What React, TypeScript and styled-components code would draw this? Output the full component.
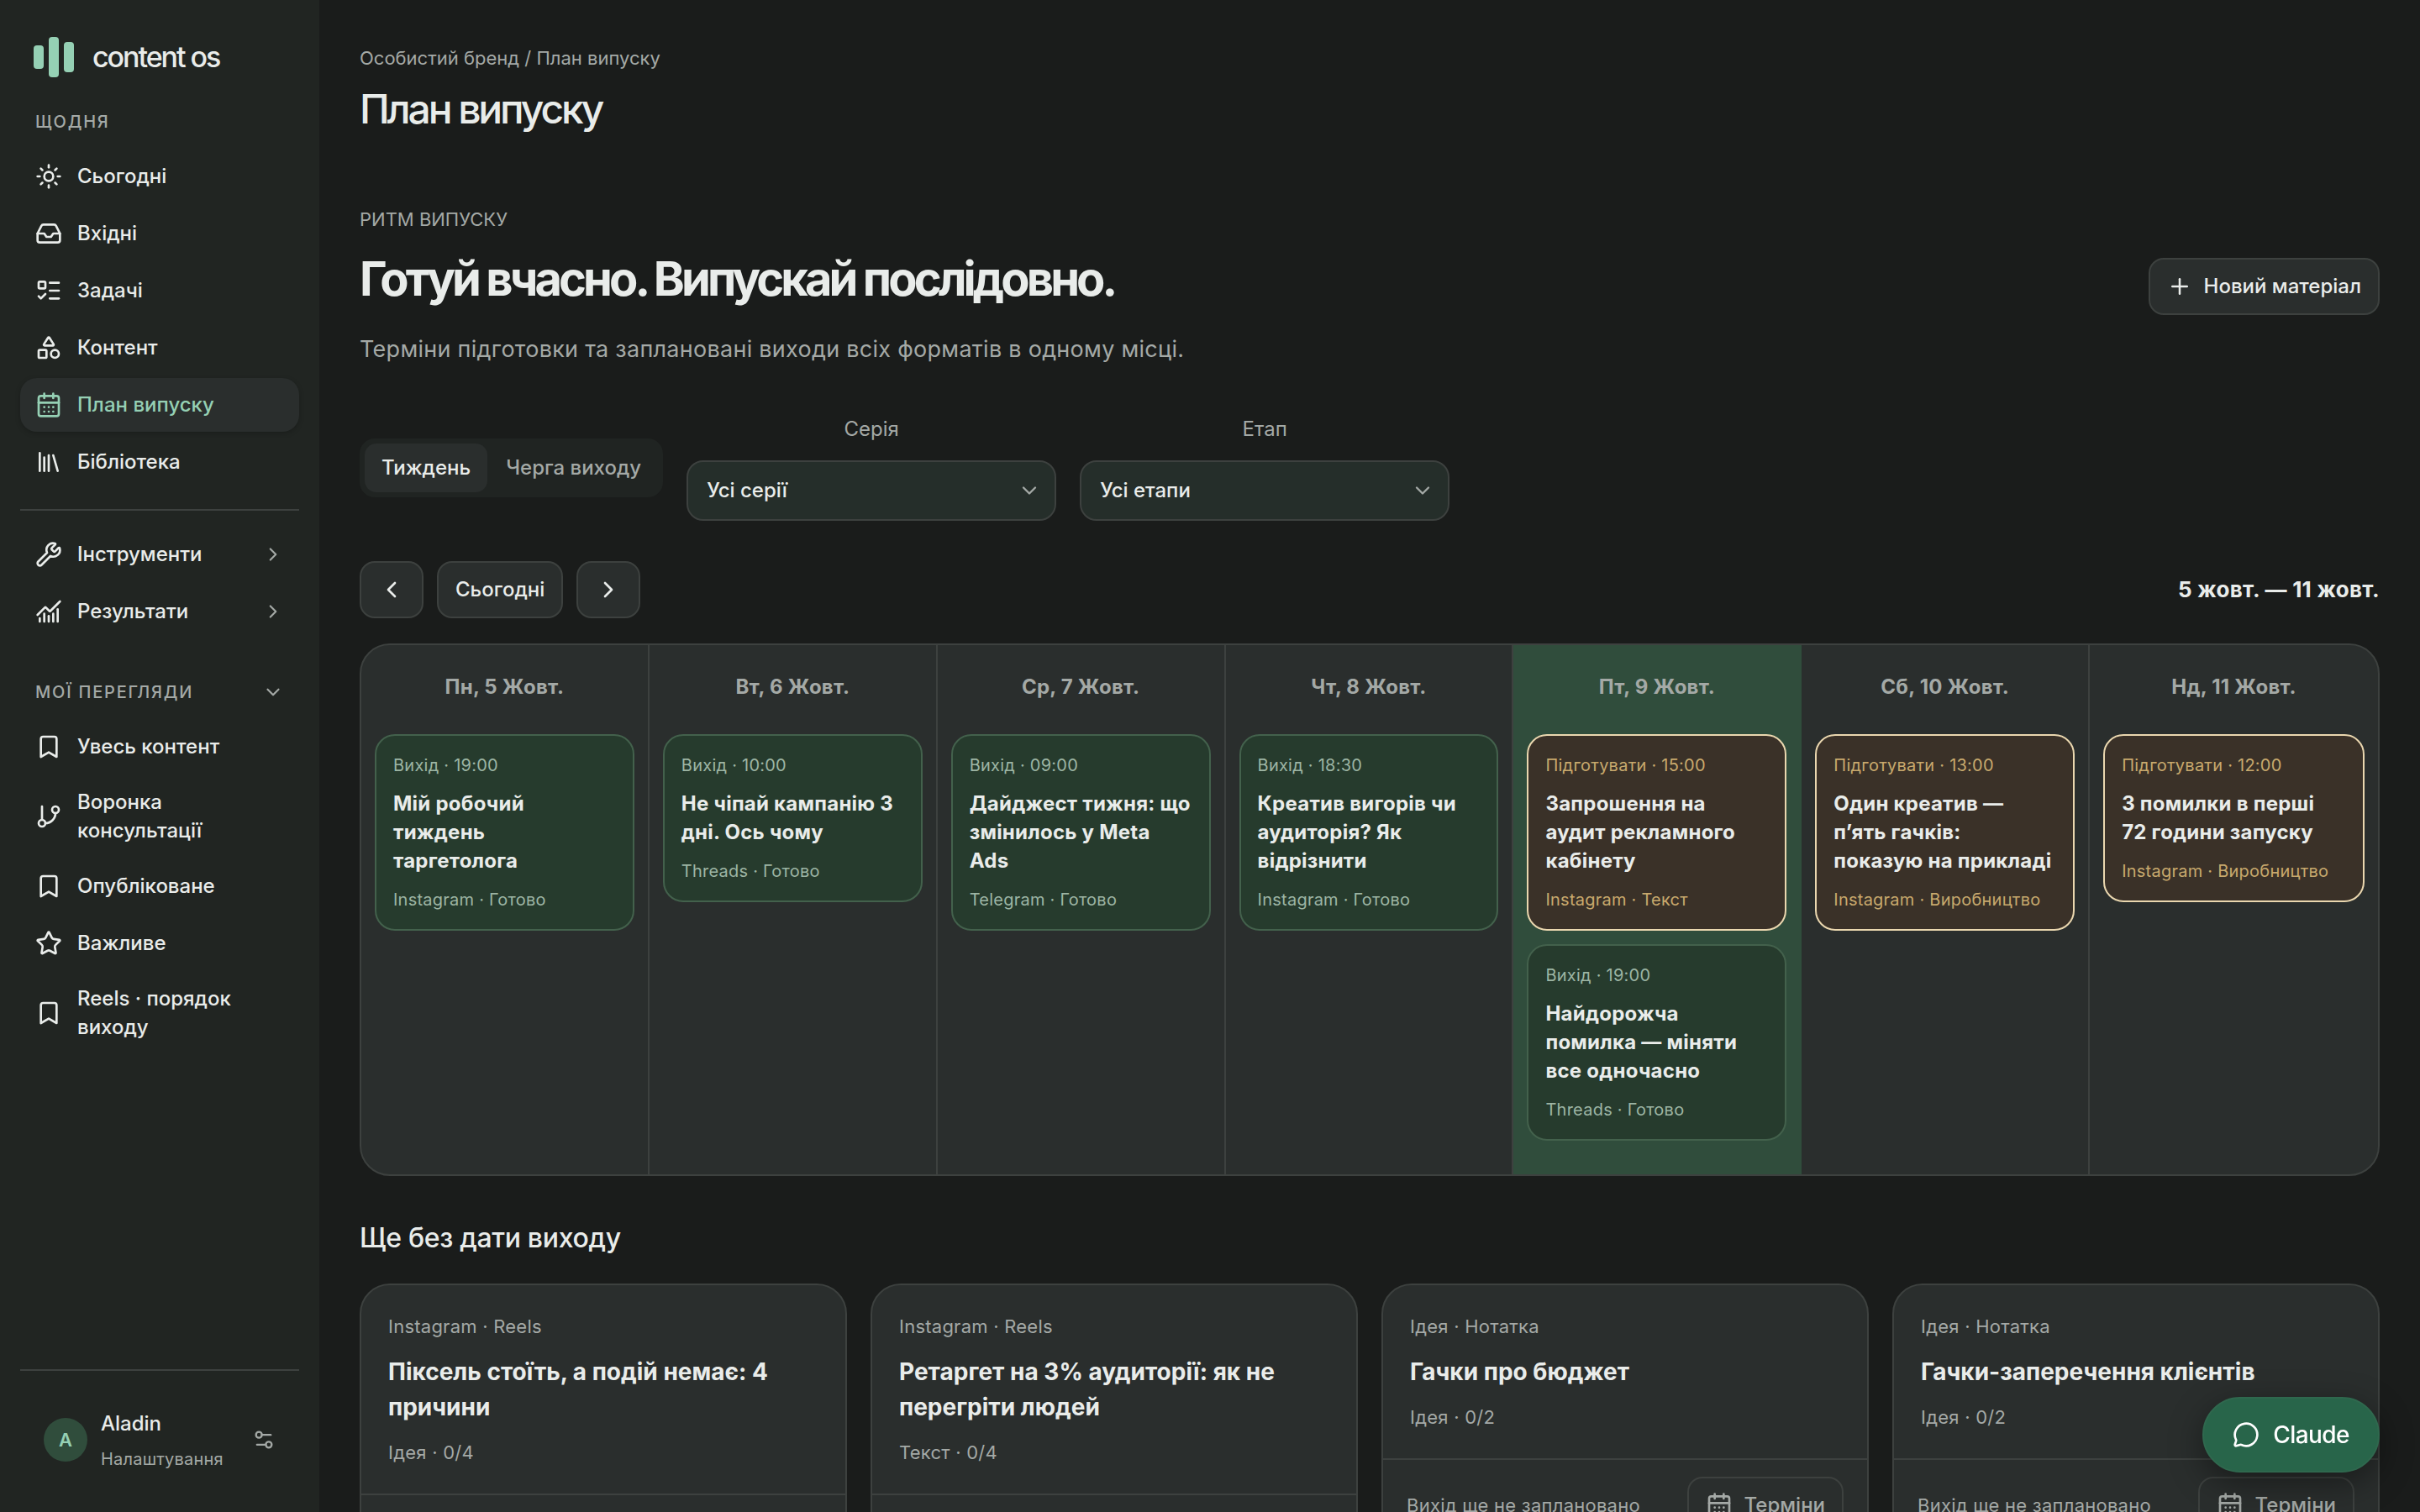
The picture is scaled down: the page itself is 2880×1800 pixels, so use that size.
import React from "react";
import styled, { createGlobalStyle, css } from "styled-components";
import {
  Bookmark,
  CalendarDays,
  ChartNoAxesCombined,
  ChevronDown,
  ChevronLeft,
  ChevronRight,
  GitBranch,
  Inbox,
  Library,
  ListTodo,
  MessageCircle,
  Plus,
  Settings2,
  Shapes,
  Star,
  Sun,
  Wrench,
  type LucideIcon,
} from "lucide-react";

const c = {
  bg: "#1a1c1b",
  side: "#212522",
  panel: "#2a2e2d",
  line: "#3d413f",
  text: "#e9ecea",
  muted: "#a4a9a6",
  accent: "#95d0b4",
  today: "#304d3c",
  green: "#263b2d",
  greenLine: "#43614c",
  greenMuted: "#9db5a4",
  brown: "#3a3128",
  brownLine: "#ead7af",
  brownMuted: "#c8a96d",
  field: "#252e2a",
  cta: "#28654a",
};

const GlobalStyle = createGlobalStyle`
  *, *::before, *::after { box-sizing: border-box; }
  body {
    margin: 0;
    background: ${c.bg};
    color: ${c.text};
    font-family: Inter, "Noto Sans", sans-serif;
    font-size: 24px;
    line-height: 34px;
  }
  button, select { font: inherit; color: inherit; letter-spacing: inherit; cursor: pointer; }
  h1, h2, h3, p, ul { margin: 0; padding: 0; }
  ul { list-style: none; }
  a { color: inherit; text-decoration: none; }
  svg { flex: none; display: block; }
`;

const Shell = styled.div`
  display: flex;
  height: 100vh;
`;

const Sidebar = styled.aside`
  display: flex;
  flex-direction: column;
  flex: none;
  width: 380px;
  padding: 40px 24px;
  background: ${c.side};
`;

const Brand = styled.a`
  display: flex;
  align-items: center;
  gap: 22px;
  height: 56px;
  padding-left: 16px;
  font-size: 34px;
  font-weight: 550;
  letter-spacing: -0.06em;
`;

const SectionTitle = styled.div`
  display: flex;
  align-items: center;
  justify-content: space-between;
  height: 66px;
  padding: 0 18px;
  color: ${c.muted};
  font-size: 20px;
  font-weight: 450;
  letter-spacing: 0.09em;
  text-transform: uppercase;
`;

const DailySection = styled.div`
  padding-top: 16px;
`;

const NavList = styled.ul`
  display: flex;
  flex-direction: column;
  gap: 4px;
`;

const NavLink = styled.a<{ $active?: boolean }>`
  display: flex;
  align-items: center;
  gap: 18px;
  min-height: 64px;
  padding: 13px 18px;
  border-radius: 20px;
  font-weight: 450;

  span {
    flex: 1;
  }

  ${(p) =>
    p.$active &&
    css`
      background: ${c.panel};
      color: ${c.accent};
      box-shadow: 0 2px 6px rgba(0, 0, 0, 0.2);
    `}
`;

const Divider = styled.hr`
  width: 100%;
  height: 2px;
  margin: 24px 0 20px;
  border: 0;
  background: ${c.line};
`;

const ViewsSection = styled.div`
  padding-top: 31px;
`;

const Account = styled.a`
  display: flex;
  align-items: center;
  gap: 16px;
  padding: 0 28px;

  > svg {
    margin-left: auto;
    color: ${c.muted};
  }
`;

const AccountArea = styled.div`
  margin-top: auto;
  padding-bottom: 6px;

  hr {
    margin-bottom: 42px;
  }
`;

const Avatar = styled.span`
  display: grid;
  place-items: center;
  width: 52px;
  height: 52px;
  border-radius: 50%;
  background: ${c.today};
  color: ${c.accent};
  font-size: 22px;
  font-weight: 600;
`;

const AccountText = styled.span`
  display: grid;
  gap: 8px;
  padding-top: 4px;
  font-weight: 450;

  small {
    color: ${c.muted};
    font-size: 20px;
    font-weight: 400;
    letter-spacing: 0.01em;
  }
`;

const Main = styled.main`
  flex: 1;
  min-width: 0;
  padding: 52px 48px;
  overflow-y: auto;
  scrollbar-width: none;
`;

const Crumbs = styled.nav`
  color: ${c.muted};
  font-size: 22px;
`;

const PageTitle = styled.h1`
  margin-top: 16px;
  font-size: 48px;
  font-weight: 550;
  line-height: 56px;
  letter-spacing: -0.065em;
`;

const Hero = styled.header`
  display: flex;
  align-items: center;
  justify-content: space-between;
  margin-top: 86px;
`;

const Eyebrow = styled.p`
  color: ${c.muted};
  font-size: 22px;
  text-transform: uppercase;
`;

const HeroTitle = styled.h2`
  margin-top: 20px;
  font-size: 56px;
  font-weight: 650;
  line-height: 68px;
  letter-spacing: -0.07em;
`;

const Lead = styled.p`
  margin-top: 28px;
  color: ${c.muted};
  font-size: 27px;
  line-height: 44px;
  letter-spacing: 0.01em;
`;

const Button = styled.button<{ $quiet?: boolean; $square?: boolean }>`
  display: inline-flex;
  align-items: center;
  justify-content: center;
  gap: 14px;
  height: 68px;
  width: ${(p) => (p.$square ? "76px" : "auto")};
  padding: 0 20px;
  border: 2px solid ${c.line};
  border-radius: 18px;
  background: ${(p) => (p.$quiet ? "transparent" : c.panel)};
  color: ${(p) => (p.$quiet ? c.muted : c.text)};
  font-weight: 450;
  white-space: nowrap;
`;

const Filters = styled.div`
  display: flex;
  align-items: center;
  gap: 28px;
  margin-top: 56px;
`;

const Tabs = styled.div`
  display: flex;
  gap: 2px;
  padding: 6px;
  border-radius: 18px;
  background: #202422;
`;

const Tab = styled.button<{ $active?: boolean }>`
  height: 58px;
  padding: 0 20px;
  border: 0;
  border-radius: 14px;
  background: ${(p) => (p.$active ? c.panel : "transparent")};
  color: ${(p) => (p.$active ? c.text : c.muted)};
  font-weight: 450;
`;

const Field = styled.label`
  display: flex;
  flex-direction: column;
  align-items: center;
  gap: 20px;
  width: 440px;
  color: ${c.muted};
`;

const SelectBox = styled.span`
  display: grid;
  align-items: center;
  width: 100%;

  > * {
    grid-area: 1 / 1;
  }

  svg {
    justify-self: end;
    margin-right: 18px;
    pointer-events: none;
  }
`;

const Select = styled.select`
  width: 100%;
  height: 72px;
  padding: 0 22px;
  appearance: none;
  border: 2px solid ${c.line};
  border-radius: 20px;
  background: ${c.field};
  color: ${c.text};
  font-weight: 450;
`;

const WeekBar = styled.div`
  display: flex;
  align-items: center;
  gap: 16px;
  margin-top: 48px;

  strong {
    margin-left: auto;
    font-size: 26px;
    font-weight: 700;
    letter-spacing: 0.01em;
  }
`;

const Week = styled.section`
  display: grid;
  grid-template-columns: repeat(7, minmax(0, 1fr));
  min-height: 634px;
  margin-top: 30px;
  border: 2px solid ${c.line};
  border-radius: 36px;
  background: ${c.panel};
  overflow: hidden;
`;

const Day = styled.div<{ $today?: boolean }>`
  display: flex;
  flex-direction: column;
  gap: 16px;
  padding: 33px 16px 38px;
  border-right: 2px solid ${(p) => (p.$today ? c.today : c.line)};
  background: ${(p) => (p.$today ? c.today : "transparent")};
  letter-spacing: 0.01em;

  &:last-child {
    border-right: 0;
  }

  h3 {
    margin-bottom: 23px;
    color: ${c.muted};
    font-size: 24px;
    font-weight: 700;
    text-align: center;
  }
`;

const Event = styled.a<{ $prepare?: boolean }>`
  display: grid;
  gap: 14px;
  padding: 20px;
  border: 2px solid ${(p) => (p.$prepare ? c.brownLine : c.greenLine)};
  border-radius: 24px;
  background: ${(p) => (p.$prepare ? c.brown : c.green)};

  small {
    color: ${(p) => (p.$prepare ? c.brownMuted : c.greenMuted)};
    font-size: 20px;
    line-height: 30px;
  }

  strong {
    font-weight: 700;
    white-space: pre-line;
  }
`;

const Backlog = styled.section`
  margin-top: 52px;

  > h2 {
    font-size: 32px;
    font-weight: 550;
    line-height: 44px;
    letter-spacing: -0.01em;
  }
`;

const BacklogGrid = styled.div`
  display: grid;
  grid-template-columns: repeat(4, minmax(0, 1fr));
  align-items: start;
  gap: 28px;
  margin-top: 32px;
`;

const Card = styled.article`
  border: 2px solid ${c.line};
  border-radius: 36px;
  background: ${c.panel};
  letter-spacing: 0.01em;
`;

const CardBody = styled.div`
  display: grid;
  gap: 16px;
  padding: 32px;

  p {
    color: ${c.muted};
    font-size: 22px;
  }

  h3 {
    font-size: 28px;
    font-weight: 700;
    line-height: 42px;
    letter-spacing: 0;
  }
`;

const CardFoot = styled.div`
  display: flex;
  align-items: center;
  justify-content: space-between;
  padding: 20px 28px;
  border-top: 2px solid ${c.line};
  color: ${c.muted};
  font-size: 22px;

  button {
    font-size: 24px;
    letter-spacing: 0;
  }
`;

const Assistant = styled.button`
  position: fixed;
  right: 48px;
  bottom: 47px;
  display: flex;
  align-items: center;
  gap: 16px;
  height: 90px;
  padding: 0 34px;
  border: 2px solid #2f684e;
  border-radius: 45px;
  background: ${c.cta};
  color: #fff;
  font-size: 28px;
  font-weight: 500;
  letter-spacing: -0.02em;
  box-shadow: 0 12px 40px rgba(0, 0, 0, 0.4);
`;

type NavEntry = { label: string; icon: LucideIcon; active?: boolean; more?: boolean };

const daily: NavEntry[] = [
  { label: "Сьогодні", icon: Sun },
  { label: "Вхідні", icon: Inbox },
  { label: "Задачі", icon: ListTodo },
  { label: "Контент", icon: Shapes },
  { label: "План випуску", icon: CalendarDays, active: true },
  { label: "Бібліотека", icon: Library },
];

const groups: NavEntry[] = [
  { label: "Інструменти", icon: Wrench, more: true },
  { label: "Результати", icon: ChartNoAxesCombined, more: true },
];

const views: NavEntry[] = [
  { label: "Увесь контент", icon: Bookmark },
  { label: "Воронка консультації", icon: GitBranch },
  { label: "Опубліковане", icon: Bookmark },
  { label: "Важливе", icon: Star },
  { label: "Reels · порядок виходу", icon: Bookmark },
];

type Item = { when: string; title: string; where: string; prepare?: boolean };

const week: { day: string; today?: boolean; items: Item[] }[] = [
  { day: "Пн, 5 Жовт.", items: [{ when: "Вихід · 19:00", title: "Мій робочий\nтиждень\nтаргетолога", where: "Instagram · Готово" }] },
  { day: "Вт, 6 Жовт.", items: [{ when: "Вихід · 10:00", title: "Не чіпай кампанію 3 дні. Ось чому", where: "Threads · Готово" }] },
  { day: "Ср, 7 Жовт.", items: [{ when: "Вихід · 09:00", title: "Дайджест тижня: що змінилось у Meta Ads", where: "Telegram · Готово" }] },
  { day: "Чт, 8 Жовт.", items: [{ when: "Вихід · 18:30", title: "Креатив вигорів чи аудиторія? Як відрізнити", where: "Instagram · Готово" }] },
  {
    day: "Пт, 9 Жовт.",
    today: true,
    items: [
      { when: "Підготувати · 15:00", title: "Запрошення на аудит рекламного кабінету", where: "Instagram · Текст", prepare: true },
      { when: "Вихід · 19:00", title: "Найдорожча помилка — міняти все одночасно", where: "Threads · Готово" },
    ],
  },
  {
    day: "Сб, 10 Жовт.",
    items: [{ when: "Підготувати · 13:00", title: "Один креатив —\nп’ять гачків:\nпоказую на прикладі", where: "Instagram · Виробництво", prepare: true }],
  },
  {
    day: "Нд, 11 Жовт.",
    items: [{ when: "Підготувати · 12:00", title: "3 помилки в перші\n72 години запуску", where: "Instagram · Виробництво", prepare: true }],
  },
];

const backlog = [
  { kind: "Instagram · Reels", title: "Піксель стоїть, а подій немає: 4 причини", stage: "Ідея · 0/4" },
  { kind: "Instagram · Reels", title: "Ретаргет на 3% аудиторії: як не перегріти людей", stage: "Текст · 0/4" },
  { kind: "Ідея · Нотатка", title: "Гачки про бюджет", stage: "Ідея · 0/2" },
  { kind: "Ідея · Нотатка", title: "Гачки-заперечення клієнтів", stage: "Ідея · 0/2" },
];

function Logo() {
  return (
    <svg width="48" height="48" viewBox="0 0 48 48" fill={c.accent} aria-hidden="true">
      <rect x="0" y="10" width="12" height="28" rx="4" />
      <rect x="18" y="0" width="12" height="48" rx="4" />
      <rect x="36" y="6" width="12" height="36" rx="4" />
    </svg>
  );
}

function Nav({ items }: { items: NavEntry[] }) {
  return (
    <NavList>
      {items.map(({ label, icon: Icon, active, more }) => (
        <li key={label}>
          <NavLink href="#" $active={active} aria-current={active ? "page" : undefined}>
            <Icon size={32} />
            <span>{label}</span>
            {more && <ChevronRight size={26} color={c.muted} />}
          </NavLink>
        </li>
      ))}
    </NavList>
  );
}

function Filter({ label, value }: { label: string; value: string }) {
  return (
    <Field>
      {label}
      <SelectBox>
        <Select defaultValue={value}>
          <option>{value}</option>
        </Select>
        <ChevronDown size={28} />
      </SelectBox>
    </Field>
  );
}

export default function App() {
  return (
    <Shell>
      <GlobalStyle />
      <Sidebar>
        <Brand href="#">
          <Logo />
          content os
        </Brand>
        <DailySection>
          <SectionTitle>Щодня</SectionTitle>
          <Nav items={daily} />
        </DailySection>
        <Divider />
        <Nav items={groups} />
        <ViewsSection>
          <SectionTitle>
            Мої перегляди
            <ChevronDown size={26} />
          </SectionTitle>
          <Nav items={views} />
        </ViewsSection>
        <AccountArea>
          <Divider />
          <Account href="#">
            <Avatar>A</Avatar>
            <AccountText>
              Aladin
              <small>Налаштування</small>
            </AccountText>
            <Settings2 size={28} />
          </Account>
        </AccountArea>
      </Sidebar>

      <Main>
        <Crumbs>
          <a href="#">Особистий бренд</a> / План випуску
        </Crumbs>
        <PageTitle>План випуску</PageTitle>

        <Hero>
          <div>
            <Eyebrow>Ритм випуску</Eyebrow>
            <HeroTitle>Готуй вчасно. Випускай послідовно.</HeroTitle>
            <Lead>Терміни підготовки та заплановані виходи всіх форматів в одному місці.</Lead>
          </div>
          <Button type="button">
            <Plus size={30} />
            Новий матеріал
          </Button>
        </Hero>

        <Filters>
          <Tabs>
            <Tab type="button" $active>
              Тиждень
            </Tab>
            <Tab type="button">Черга виходу</Tab>
          </Tabs>
          <Filter label="Серія" value="Усі серії" />
          <Filter label="Етап" value="Усі етапи" />
        </Filters>

        <WeekBar>
          <Button type="button" $square aria-label="Попередній тиждень">
            <ChevronLeft size={32} />
          </Button>
          <Button type="button">Сьогодні</Button>
          <Button type="button" $square aria-label="Наступний тиждень">
            <ChevronRight size={32} />
          </Button>
          <strong>5 жовт. — 11 жовт.</strong>
        </WeekBar>

        <Week>
          {week.map((d) => (
            <Day key={d.day} $today={d.today}>
              <h3>{d.day}</h3>
              {d.items.map((it) => (
                <Event key={it.title} href="#" $prepare={it.prepare}>
                  <small>{it.when}</small>
                  <strong>{it.title}</strong>
                  <small>{it.where}</small>
                </Event>
              ))}
            </Day>
          ))}
        </Week>

        <Backlog>
          <h2>Ще без дати виходу</h2>
          <BacklogGrid>
            {backlog.map((b) => (
              <Card key={b.title}>
                <CardBody>
                  <p>{b.kind}</p>
                  <h3>{b.title}</h3>
                  <p>{b.stage}</p>
                </CardBody>
                <CardFoot>
                  Вихід ще не заплановано
                  <Button type="button" $quiet>
                    <CalendarDays size={32} />
                    Терміни
                  </Button>
                </CardFoot>
              </Card>
            ))}
          </BacklogGrid>
        </Backlog>
      </Main>

      <Assistant type="button">
        <MessageCircle size={32} />
        Claude
      </Assistant>
    </Shell>
  );
}
